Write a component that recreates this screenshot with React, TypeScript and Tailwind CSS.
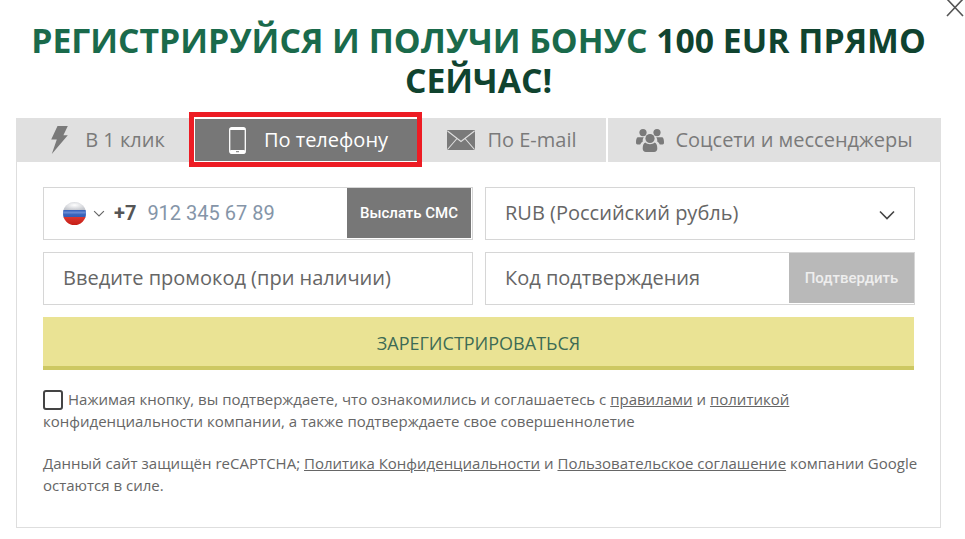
const font = "font-['Open_Sans',sans-serif]";

function Flag() {
  return (
    <svg width="23" height="23" viewBox="0 0 23 23" className="shrink-0">
      <defs>
        <clipPath id="flag-clip">
          <circle cx="11.5" cy="11.5" r="11.5" />
        </clipPath>
        <linearGradient id="flag-gloss" x1="0" y1="0" x2="0" y2="1">
          <stop offset="0" stopColor="#fff" stopOpacity="0.1" />
          <stop offset="0.5" stopColor="#fff" stopOpacity="0.15" />
          <stop offset="1" stopColor="#000" stopOpacity="0.12" />
        </linearGradient>
        <radialGradient id="flag-top" cx="0.5" cy="0.35" r="0.6">
          <stop offset="0" stopColor="#ffffff" />
          <stop offset="1" stopColor="#b9bcc4" />
        </radialGradient>
      </defs>
      <g clipPath="url(#flag-clip)">
        <rect width="23" height="9" fill="url(#flag-top)" />
        <rect y="8" width="23" height="7.5" fill="#1f4fb4" />
        <rect y="9.5" width="23" height="2" fill="#5f86d6" opacity="0.7" />
        <rect y="15" width="23" height="8" fill="#e2231a" />
        <rect width="23" height="23" fill="url(#flag-gloss)" />
      </g>
    </svg>
  );
}

function Chevron({ className }: { className: string }) {
  return (
    <svg viewBox="0 0 16 10" className={className} fill="none" stroke="currentColor" strokeWidth="1.6">
      <path d="M1 1.5l7 7 7-7" />
    </svg>
  );
}

function BoltIcon() {
  return (
    <svg width="17" height="28" viewBox="0 0 17 28" fill="#7a7a7a" className="shrink-0">
      <path d="M6.5 0h10.3l-4.4 9.2h4.4L0.8 28l5-14.6H0.2z" />
    </svg>
  );
}

function PhoneIcon() {
  return (
    <svg width="17" height="27" viewBox="0 0 17 27" className="shrink-0">
      <rect x="0.7" y="0.7" width="15.6" height="25.6" rx="2" fill="none" stroke="#fff" strokeWidth="1.3" />
      <rect x="1" y="23" width="15" height="3.4" rx="1" fill="#fff" />
      <rect x="1" y="1" width="15" height="2" fill="#fff" />
      <rect x="7" y="24.2" width="3" height="1" fill="#777" />
    </svg>
  );
}

function MailIcon() {
  return (
    <svg width="28" height="20" viewBox="0 0 28 20" className="shrink-0">
      <rect width="28" height="20" rx="1" fill="#7a7a7a" />
      <path d="M0.5 1l13.5 10.5L27.5 1M0.5 19.5l9.5-11M27.5 19.5l-9.5-11" fill="none" stroke="#e0e0e0" strokeWidth="1.1" />
    </svg>
  );
}

function UsersIcon() {
  return (
    <svg width="28" height="23" viewBox="0 0 28 23" fill="#7a7a7a" className="shrink-0">
      <circle cx="7" cy="3.6" r="3.6" />
      <circle cx="21" cy="3.6" r="3.6" />
      <path d="M1.6 8.2h6.2c-.9 1.2-1.3 2.7-1 4.3-1.2.7-2.1 1.7-2.6 3H1.5C.5 15.5 0 14.8 0 13.6 0 11 .4 8.9 1.6 8.2z" />
      <path d="M26.4 8.2h-6.2c.9 1.2 1.3 2.7 1 4.3 1.2.7 2.1 1.7 2.6 3h2.7c1 0 1.5-.7 1.5-1.9 0-2.6-.4-4.7-1.6-5.4z" />
      <circle cx="14" cy="9.5" r="4.6" />
      <path d="M9.3 13.6c1.2 1 2.9 1.7 4.7 1.7s3.5-.7 4.7-1.7c1.7.6 2.6 2.8 2.6 5.9 0 2.2-1.3 3.5-3.2 3.5h-8.2c-1.9 0-3.2-1.3-3.2-3.5 0-3.1.9-5.3 2.6-5.9z" />
    </svg>
  );
}

function Tab({ label, icon, width, gap, active, divider }: { label: string; icon: React.ReactNode; width: string; gap: string; active?: boolean; divider?: boolean }) {
  return (
    <div
      className={`flex h-full items-center justify-center ${width} ${gap} ${
        active ? "border border-white bg-[#777777] pl-[5px] text-white" : "text-[#7a7a7a]"
      } ${divider ? "border-l-2 border-white" : ""}`}
    >
      {icon}
      <span className="text-[20px] leading-none">{label}</span>
    </div>
  );
}

export default function App() {
  return (
    <div className={`relative h-[539px] w-[965px] overflow-hidden bg-white ${font}`}>
      {/* close */}
      <svg width="20" height="18" viewBox="0 0 20 18" className="absolute right-0 top-0" stroke="#555" strokeWidth="1.6">
        <path d="M2 -1l16 17M18 -1L2 16" />
      </svg>

      <h1 className="w-[965px] pl-[12px] pr-[20px] pt-[20px] text-center text-[33.75px] font-bold leading-[40px] text-[#1a6a4b]">
        РЕГИСТРИРУЙСЯ И ПОЛУЧИ БОНУС <span className="text-[#10432f]">100 EUR ПРЯМО СЕЙЧАС!</span>
      </h1>

      <div className="mx-[16px] mt-[18px] h-[410px] w-[925px]">
        <div className="relative flex h-[44px] bg-[#e0e0e0]">
          <Tab label="В 1 клик" width="w-[178px] pl-[6px]" gap="gap-[17px]" icon={<BoltIcon />} />
          <Tab label="По телефону" width="w-[224px]" gap="gap-[18px]" active icon={<PhoneIcon />} />
          <Tab label="По E-mail" width="w-[188px]" gap="gap-[12px]" icon={<MailIcon />} />
          <Tab label="Соцсети и мессенджеры" width="w-[335px]" gap="gap-[11px]" divider icon={<UsersIcon />} />
          {/* red annotation frame */}
          <div className="absolute left-[173px] top-[-6px] h-[55px] w-[233px] border-[5px] border-[#ed1c24]" />
        </div>

        <div className="h-[366px] border border-t-0 border-[#dedede] px-[26px] pt-[25px]">
          <div className="grid grid-cols-[430px_430px] gap-x-[12px] gap-y-[12px]">
            <div className="flex h-[53px] items-center border border-[#d6d6d6] pl-[19px]">
              <Flag />
              <Chevron className="ml-[7px] h-[7px] w-[12px] text-[#666]" />
              <span className="mb-[2px] ml-[9px] font-['Roboto',sans-serif] text-[20px] font-bold text-[#555]">+7</span>
              <span className="mb-[2px] ml-[11px] font-['Roboto',sans-serif] text-[20px] text-[#8595a8]">912 345 67 89</span>
              <div className="mb-px ml-auto mr-px flex h-[50px] w-[124px] items-center justify-center bg-[#777777] font-['Roboto',sans-serif] text-[15px] font-medium text-white">
                Выслать СМС
              </div>
            </div>
            <div className="flex h-[53px] items-center justify-between border border-[#d6d6d6] pl-[19px] pr-[19px] text-[20px] text-[#666]">
              <span className="mb-[2px]">RUB (Российский рубль)</span>
              <Chevron className="mt-[3px] h-[10px] w-[16px] text-[#444]" />
            </div>
            <div className="flex h-[53px] items-center border border-[#d6d6d6] pl-[19px] text-[20px] text-[#666]">
              <span className="mb-[2px]">Введите промокод (при наличии)</span>
            </div>
            <div className="flex h-[53px] items-center border border-[#d6d6d6] pl-[19px] text-[20px] text-[#666]">
              <span className="mb-[2px]">Код подтверждения</span>
              <div className="mb-px ml-auto flex h-[50px] w-[125px] items-center justify-center bg-[#b9b9b9] font-['Roboto',sans-serif] text-[15px] font-medium text-[#eeeeee]">
                Подтвердить
              </div>
            </div>
          </div>

          <div className="mt-[12px] flex h-[53px] items-center justify-center border-b-[4px] border-[#cdc862] bg-[#eae394] pt-[3px] text-[18px] text-[#3d6b55]">
            ЗАРЕГИСТРИРОВАТЬСЯ
          </div>

          <p className="mt-[18px] text-[15px] leading-[22px] text-[#666]">
            <span className="mr-[5px] inline-block h-[20px] w-[20px] rounded-[3px] border-2 border-[#444] align-[-5px]" />
            Нажимая кнопку, вы подтверждаете, что ознакомились и соглашаетесь с <u>правилами</u> и <u>политикой</u> конфиденциальности компании, а также подтверждаете свое совершеннолетие
          </p>

          <p className="-mr-[10px] mt-[20px] text-[15px] leading-[22px] text-[#666]">
            Данный сайт защищён reCAPTCHA; <u>Политика Конфиденциальности</u> и <u>Пользовательское соглашение</u> компании Google остаются в силе.
          </p>
        </div>
      </div>
    </div>
  );
}
